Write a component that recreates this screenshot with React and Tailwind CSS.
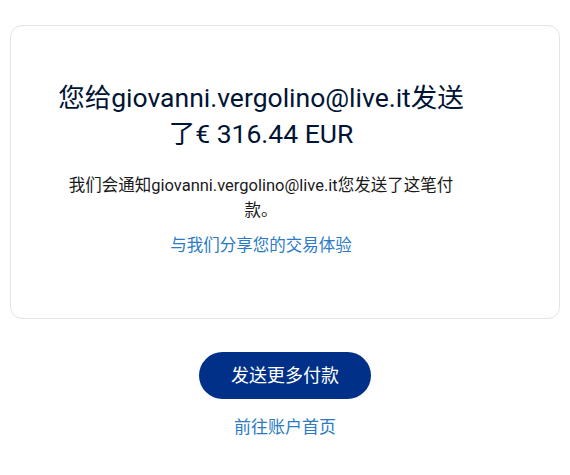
const font = { fontFamily: '"Roboto", "Noto Sans CJK SC", sans-serif' };

export default function App() {
  return (
    <div className="min-h-screen bg-white px-[10px] pt-[25px]" style={font}>
      <div className="rounded-xl border border-[#e3e3e3] bg-white pl-[46px] pr-[94px] pt-[54px] pb-[60px] text-center">
        <h1 className="text-[26.5px] leading-[36px] font-normal text-[#001435]">
          您给giovanni.vergolino@live.it发送了€ 316.44 EUR
        </h1>
        <p className="mt-[21px] text-[16.5px] leading-[25px] text-[#1a1a1a]">
          我们会通知giovanni.vergolino@live.it您发送了这笔付款。
        </p>
        <a href="#" className="mt-[10px] block text-[16.5px] leading-[25px] text-[#2a7bc4]">
          与我们分享您的交易体验
        </a>
      </div>
      <div className="mt-[33px] flex flex-col items-center">
        <button className="h-[47px] w-[172px] rounded-full bg-[#003087] text-[18px] text-white">
          发送更多付款
        </button>
        <a href="#" className="mt-[16px] text-[17px] leading-[24px] text-[#2a7bc4]">
          前往账户首页
        </a>
      </div>
    </div>
  );
}
